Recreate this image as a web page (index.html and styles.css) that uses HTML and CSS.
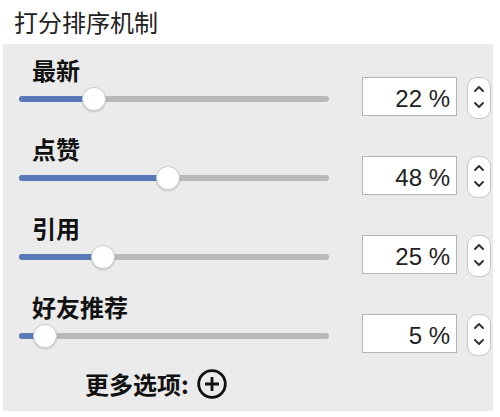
FILE: index.html
```html
<!DOCTYPE html>
<html lang="zh-CN">
<head>
<meta charset="utf-8">
<title>打分排序机制</title>
<link rel="stylesheet" href="styles.css">
</head>
<body>
<h1 class="title">打分排序机制</h1>
<section class="panel">
  <div class="row">
    <div class="col">
      <div class="label">最新</div>
      <div class="slider" style="--v:22">
        <div class="track"><div class="fill"></div></div>
        <div class="thumb"></div>
      </div>
    </div>
    <div class="field">22 %</div>
    <div class="stepper"><svg viewBox="0 0 24 42" width="24" height="42"><path d="M8 14 L12 10 L16 14 M8 26 L12 30 L16 26"/></svg></div>
  </div>
  <div class="row">
    <div class="col">
      <div class="label">点赞</div>
      <div class="slider" style="--v:48">
        <div class="track"><div class="fill"></div></div>
        <div class="thumb"></div>
      </div>
    </div>
    <div class="field">48 %</div>
    <div class="stepper"><svg viewBox="0 0 24 42" width="24" height="42"><path d="M8 14 L12 10 L16 14 M8 26 L12 30 L16 26"/></svg></div>
  </div>
  <div class="row">
    <div class="col">
      <div class="label">引用</div>
      <div class="slider" style="--v:25">
        <div class="track"><div class="fill"></div></div>
        <div class="thumb"></div>
      </div>
    </div>
    <div class="field">25 %</div>
    <div class="stepper"><svg viewBox="0 0 24 42" width="24" height="42"><path d="M8 14 L12 10 L16 14 M8 26 L12 30 L16 26"/></svg></div>
  </div>
  <div class="row">
    <div class="col">
      <div class="label">好友推荐</div>
      <div class="slider" style="--v:5">
        <div class="track"><div class="fill"></div></div>
        <div class="thumb"></div>
      </div>
    </div>
    <div class="field">5 %</div>
    <div class="stepper"><svg viewBox="0 0 24 42" width="24" height="42"><path d="M8 14 L12 10 L16 14 M8 26 L12 30 L16 26"/></svg></div>
  </div>
  <div class="more">
    <span class="more-text">更多选项:</span>
    <svg class="plus" viewBox="0 0 30 30" width="30" height="30"><circle cx="15" cy="15" r="13.3"/><path d="M15 8 V22 M8 15 H22"/></svg>
  </div>
</section>
</body>
</html>
```
FILE: styles.css
```css
* { box-sizing: border-box; }
html, body { margin: 0; padding: 0; background: #ffffff; }
body {
  width: 500px;
  height: 417px;
  overflow: hidden;
  font-family: "Noto Sans CJK SC", "Noto Sans", sans-serif;
  color: #1a1a1a;
}
.title {
  margin: 0;
  padding: 8px 0 0 14px;
  height: 36px;
  font-size: 24px;
  line-height: 28px;
  font-weight: 400;
  color: #222;
}
.panel {
  margin: 8px 7px 0 3px;
  height: 367px;
  background: #ebebeb;
  padding: 12px 2px 0 16px;
}
.row {
  display: flex;
  align-items: flex-start;
  height: 79px;
}
.col {
  width: 310px;
  display: flex;
  flex-direction: column;
  gap: 3px;
}
.label {
  margin-left: 13px;
  font-size: 24px;
  line-height: 28px;
  font-weight: 700;
  color: #111;
}
.slider {
  position: relative;
  height: 24px;
  display: flex;
  align-items: center;
}
.track {
  width: 100%;
  height: 6px;
  border-radius: 3px;
  background: #b9b9b9;
  overflow: hidden;
}
.fill {
  height: 100%;
  width: calc(12px + (310px - 24px) * var(--v) / 100);
  background: #5a79b9;
}
.thumb {
  position: absolute;
  top: 0;
  left: calc((310px - 24px) * var(--v) / 100);
  width: 24px;
  height: 24px;
  border-radius: 50%;
  background: #fff;
  border: 1px solid #cdcdcd;
  box-shadow: 0 1px 2px rgba(0,0,0,0.18);
}
.field {
  margin: 21px 0 0 33px;
  width: 95px;
  height: 39px;
  background: #fff;
  border: 1px solid #b4b4b4;
  display: flex;
  align-items: center;
  justify-content: flex-end;
  padding: 5px 6px 0 0;
  font-family: "Liberation Sans", Arial, sans-serif;
  font-size: 24px;
  color: #222;
}
.stepper {
  margin: 21px 0 0 10px;
  width: 24px;
  height: 42px;
  background: #fff;
  border: 1px solid #c6c6c6;
  border-radius: 10px;
  overflow: hidden;
}
.stepper svg {
  display: block;
  margin: -1px 0 0 -1px;
  fill: none;
  stroke: #333;
  stroke-width: 2;
  stroke-linecap: round;
  stroke-linejoin: round;
}
.more {
  margin: -2px 0 0 66px;
  display: flex;
  align-items: center;
  height: 28px;
  gap: 8px;
}
.more-text {
  font-size: 24px;
  line-height: 28px;
  font-weight: 700;
  color: #111;
}
.plus {
  fill: none;
  stroke: #111;
  stroke-width: 2.8;
}
```
